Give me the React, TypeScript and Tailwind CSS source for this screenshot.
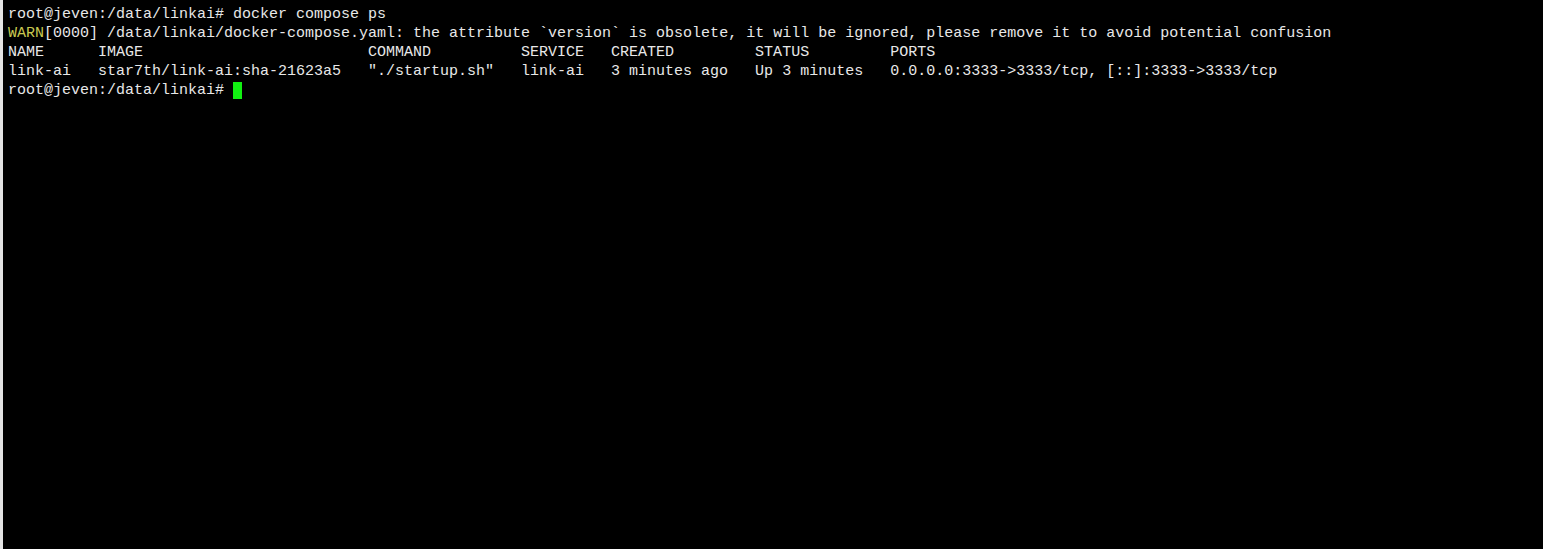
const header = ["NAME".padEnd(10), "IMAGE".padEnd(30), "COMMAND".padEnd(17), "SERVICE".padEnd(10), "CREATED".padEnd(16), "STATUS".padEnd(15), "PORTS"].join("");
const row = ["link-ai".padEnd(10), "star7th/link-ai:sha-21623a5".padEnd(30), "\"./startup.sh\"".padEnd(17), "link-ai".padEnd(10), "3 minutes ago".padEnd(16), "Up 3 minutes".padEnd(15), "0.0.0.0:3333->3333/tcp, [::]:3333->3333/tcp"].join("");

const lines = [
  { prompt: true, text: "docker compose ps" },
  { warn: true, text: "[0000] /data/linkai/docker-compose.yaml: the attribute `version` is obsolete, it will be ignored, please remove it to avoid potential confusion" },
  { text: header },
  { text: row },
];

export default function App() {
  return (
    <div className="flex h-[549px] w-[1543px] bg-black">
      <div className="w-[3px] bg-[#e4e4e4]" />
      <div
        className="flex-1 whitespace-pre pl-[5px] pt-[5px] text-[15px] leading-[19px] text-[#e8e8e8]"
        style={{ fontFamily: '"Liberation Mono", monospace' }}
      >
        {lines.map((l, i) => (
          <div key={i}>
            {l.prompt && "root@jeven:/data/linkai# "}
            {l.warn && <span className="text-[#c8c850]">WARN</span>}
            {l.text}
          </div>
        ))}
        <div className="flex items-center">
          <span>root@jeven:/data/linkai# </span>
          <span className="inline-block h-[17px] w-[9px] bg-[#11f011]" />
        </div>
      </div>
    </div>
  );
}
